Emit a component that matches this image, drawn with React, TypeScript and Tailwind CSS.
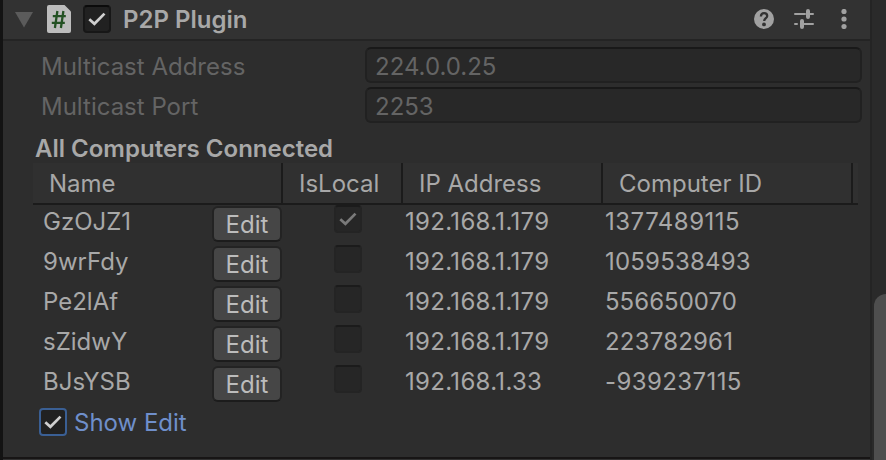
type Computer = { name: string; local: boolean; ip: string; id: string; tracking: string };

const computers: Computer[] = [
  { name: "GzOJZ1", local: true, ip: "192.168.1.179", id: "1377489115", tracking: "tracking-[0.5px]" },
  { name: "9wrFdy", local: false, ip: "192.168.1.179", id: "1059538493", tracking: "tracking-[0.2px]" },
  { name: "Pe2lAf", local: false, ip: "192.168.1.179", id: "556650070", tracking: "tracking-[0.03px]" },
  { name: "sZidwY", local: false, ip: "192.168.1.179", id: "223782961", tracking: "tracking-[0.2px]" },
  { name: "BJsYSB", local: false, ip: "192.168.1.33", id: "-939237115", tracking: "tracking-[0.4px]" },
];

function Check({ className }: { className: string }) {
  return (
    <svg viewBox="0 0 28 28" className={`size-7 shrink-0 ${className}`} fill="none" stroke="currentColor" strokeWidth="2.7">
      <path d="M6.3 14.2 11.4 18.8 21.5 8.6" strokeLinecap="butt" strokeLinejoin="miter" />
    </svg>
  );
}

function Field({ label, value }: { label: string; value: string }) {
  return (
    <div className="flex h-10 items-start text-[#646464]">
      <div className="w-[324px] leading-[39px]">{label}</div>
      <div className="h-9 w-[497px] rounded-md border-2 border-[#212121] border-t-[#191919] bg-[#282828] pl-2 leading-[35px]">
        {value}
      </div>
    </div>
  );
}

function Row({ computer }: { computer: Computer }) {
  return (
    <div className="flex h-10 items-start">
      <div className="w-[169px] leading-[33px]">{computer.name}</div>
      <button className="mt-px h-9 w-[70px] rounded-md border-2 border-[#232323] border-b-[#1c1c1c] bg-[#464646] leading-[34px] text-[#bcbcbc]">
        Edit
      </button>
      <div className="ml-[52px] size-7 rounded border-2 border-[#242424] border-t-[#1b1b1b] bg-[#262626]">
        {computer.local && <Check className="-m-0.5 text-[#7a7a7a]" />}
      </div>
      <div className="ml-[43px] w-[200px] leading-[33px] tracking-[0.3px]">{computer.ip}</div>
      <div className={`leading-[33px] ${computer.tracking}`}>{computer.id}</div>
    </div>
  );
}

export default function App() {
  return (
    <div className="flex h-[460px] w-[886px] overflow-hidden bg-[#2d2d2d] font-['Inter',sans-serif] text-2xl font-[370] whitespace-nowrap text-[#a8a8a8]">
      <div className="w-[3px] bg-[#131313]" />
      <main className="flex w-[867px] flex-col">
        <header className="flex h-[41px] items-start border-b-2 border-[#242424] bg-[#323232]">
          <svg viewBox="0 0 18 16" className="mt-3 ml-3 h-4 w-[18px]" fill="#5b5b5b">
            <path d="M0 0h18L9 15.5z" />
          </svg>
          <svg viewBox="0 0 24 28" className="mt-[5px] ml-[14px] h-7 w-6">
            <path d="M2 0h15.5L24 6.5V26a2 2 0 0 1-2 2H2a2 2 0 0 1-2-2V2a2 2 0 0 1 2-2z" fill="#bdbdbd" />
            <path d="M10.4 6 7.9 23M16.4 6 13.9 23M5.8 11.2h13M4.8 17.8h13" stroke="#245224" strokeWidth="2.3" fill="none" />
          </svg>
          <div className="mt-[5px] ml-3 size-7 rounded border-2 border-[#171717] border-t-[#0b0b0b] bg-[#212121]">
            <Check className="-m-0.5 text-[#cfcfcf]" />
          </div>
          <h1 className="ml-3 w-[631px] font-semibold leading-[39px]">P2P Plugin</h1>
          <svg viewBox="0 0 20 20" className="mt-[9px] size-5">
            <circle cx="10" cy="10" r="10" fill="#a1a1a1" />
            <path d="M6.9 7.5C7 5.2 8.1 4.1 10.1 4.1c1.9 0 3.1 1.1 3.1 2.8 0 2.3-3 2.3-3 5.2" fill="none" stroke="#323232" strokeWidth="2.3" />
            <circle cx="10" cy="15.4" r="1.9" fill="#323232" />
          </svg>
          <svg viewBox="0 0 20 20" className="mt-[9px] ml-5 size-5" fill="none" stroke="#a1a1a1" strokeLinecap="round">
            <path d="M1 5h10M15 5h4M1 15h2M9 15h10" strokeWidth="2" />
            <path d="M14 2v6M8 12v6" strokeWidth="4" />
          </svg>
          <svg viewBox="0 0 6 20" className="mt-[9px] ml-[27px] h-5 w-1.5" fill="#a1a1a1">
            <circle cx="3" cy="2.5" r="2.6" />
            <circle cx="3" cy="10" r="2.6" />
            <circle cx="3" cy="17.5" r="2.6" />
          </svg>
        </header>
        <section className="flex flex-col pt-1.5 pl-[38px]">
          <Field label="Multicast Address" value="224.0.0.25" />
          <Field label="Multicast Port" value="2253" />
        </section>
        <h2 className="h-9 pl-8 font-semibold leading-[43px]">All Computers Connected</h2>
        <section className="ml-[30px] w-[825px]">
          <div className="flex h-[42px] border-b-2 border-[#1b1b1b] bg-[#303030] leading-[41px]">
            <div className="w-[250px] border-r-2 border-[#1b1b1b] pl-4">Name</div>
            <div className="w-[120px] border-r-2 border-[#1b1b1b] pl-4">IsLocal</div>
            <div className="w-[200px] border-r-2 border-[#1b1b1b] pl-4">IP Address</div>
            <div className="w-[250px] border-r-2 border-[#1b1b1b] pl-4">Computer ID</div>
          </div>
          <div className="pl-[10px]">
            {computers.map((computer) => (
              <Row key={computer.name} computer={computer} />
            ))}
          </div>
        </section>
        <footer className="flex h-[54px] items-start border-b-2 border-[#171515] pt-[3px] pl-9">
          <div className="size-7 rounded border-2 border-[#3a5f94] bg-[#212121]">
            <Check className="-m-0.5 text-[#cfcfcf]" />
          </div>
          <div className="ml-[7px] leading-[29px] text-[#6f8fcb]">Show Edit</div>
        </footer>
        <div className="flex-1 bg-[#323232]" />
      </main>
      <aside className="flex w-4 border-l-2 border-[#242424] bg-[#2a2a2a] pt-[294px] pl-0.5">
        <div className="h-[190px] w-6 shrink-0 rounded-t-xl bg-[#4e4e4e]" />
      </aside>
    </div>
  );
}
